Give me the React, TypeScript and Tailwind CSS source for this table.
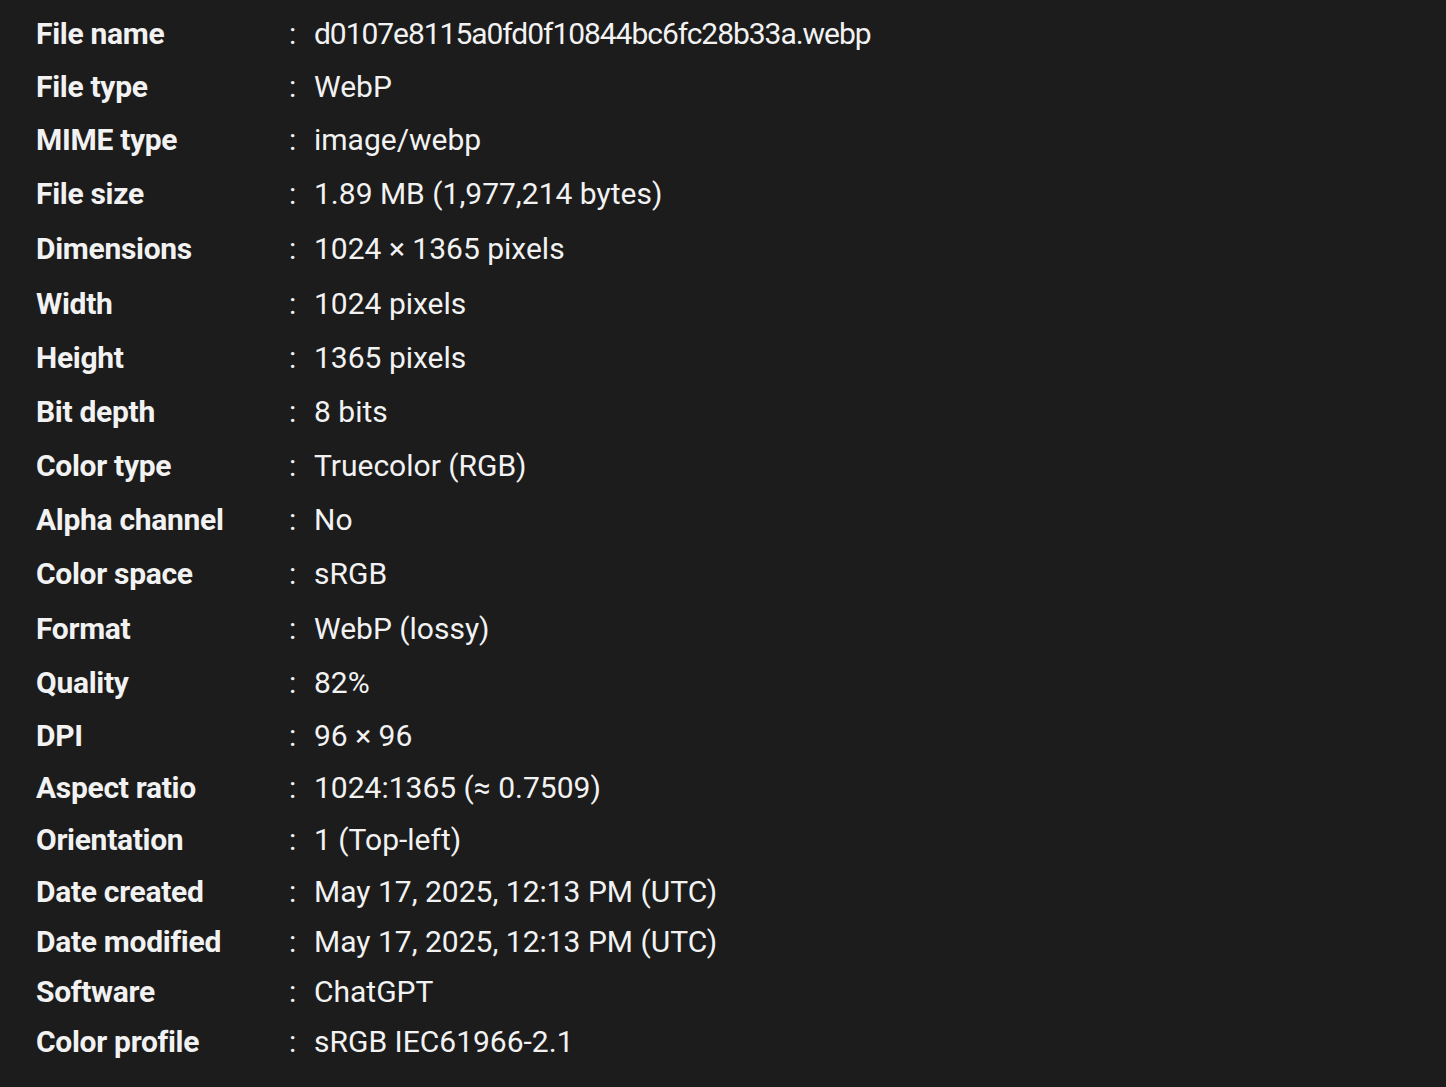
import React from 'react';

const rows: { label: string; value: string; h: string; v?: string }[] = [
  { label: 'File name', value: 'd0107e8115a0fd0f10844bc6fc28b33a.webp', h: 'h-[53px]', v: 'tracking-[-1.05px]' },
  { label: 'File type', value: 'WebP', h: 'h-[52px]' },
  { label: 'MIME type', value: 'image/webp', h: 'h-[54px]' },
  { label: 'File size', value: '1.89 MB (1,977,214 bytes)', h: 'h-[55px]' },
  { label: 'Dimensions', value: '1024 × 1365 pixels', h: 'h-[55px]' },
  { label: 'Width', value: '1024 pixels', h: 'h-[54px]' },
  { label: 'Height', value: '1365 pixels', h: 'h-[54px]' },
  { label: 'Bit depth', value: '8 bits', h: 'h-[54px]' },
  { label: 'Color type', value: 'Truecolor (RGB)', h: 'h-[54px]' },
  { label: 'Alpha channel', value: 'No', h: 'h-[54px]' },
  { label: 'Color space', value: 'sRGB', h: 'h-[54px]' },
  { label: 'Format', value: 'WebP (lossy)', h: 'h-[56px]' },
  { label: 'Quality', value: '82%', h: 'h-[53px]' },
  { label: 'DPI', value: '96 × 96', h: 'h-[52px]' },
  { label: 'Aspect ratio', value: '1024:1365 (≈ 0.7509)', h: 'h-[52px]' },
  { label: 'Orientation', value: '1 (Top-left)', h: 'h-[53px]' },
  { label: 'Date created', value: 'May 17, 2025, 12:13 PM (UTC)', h: 'h-[50px]' },
  { label: 'Date modified', value: 'May 17, 2025, 12:13 PM (UTC)', h: 'h-[50px]' },
  { label: 'Software', value: 'ChatGPT', h: 'h-[50px]' },
  { label: 'Color profile', value: 'sRGB IEC61966-2.1', h: 'h-[50px]' },
];

export default function App() {
  return (
    <div className="w-[1446px] h-[1087px] overflow-hidden bg-[#1c1c1c] pt-[7px] pl-[36px] text-[#f2f2f2] font-['Roboto',sans-serif] text-[30px]">
      {rows.map((r) => (
        <div key={r.label} className={`${r.h} flex items-center`}>
          <div className="w-[253px] font-bold tracking-[-0.3px]">{r.label}</div>
          <div className="w-[25px]">:</div>
          <div className={r.v}>{r.value}</div>
        </div>
      ))}
    </div>
  );
}
